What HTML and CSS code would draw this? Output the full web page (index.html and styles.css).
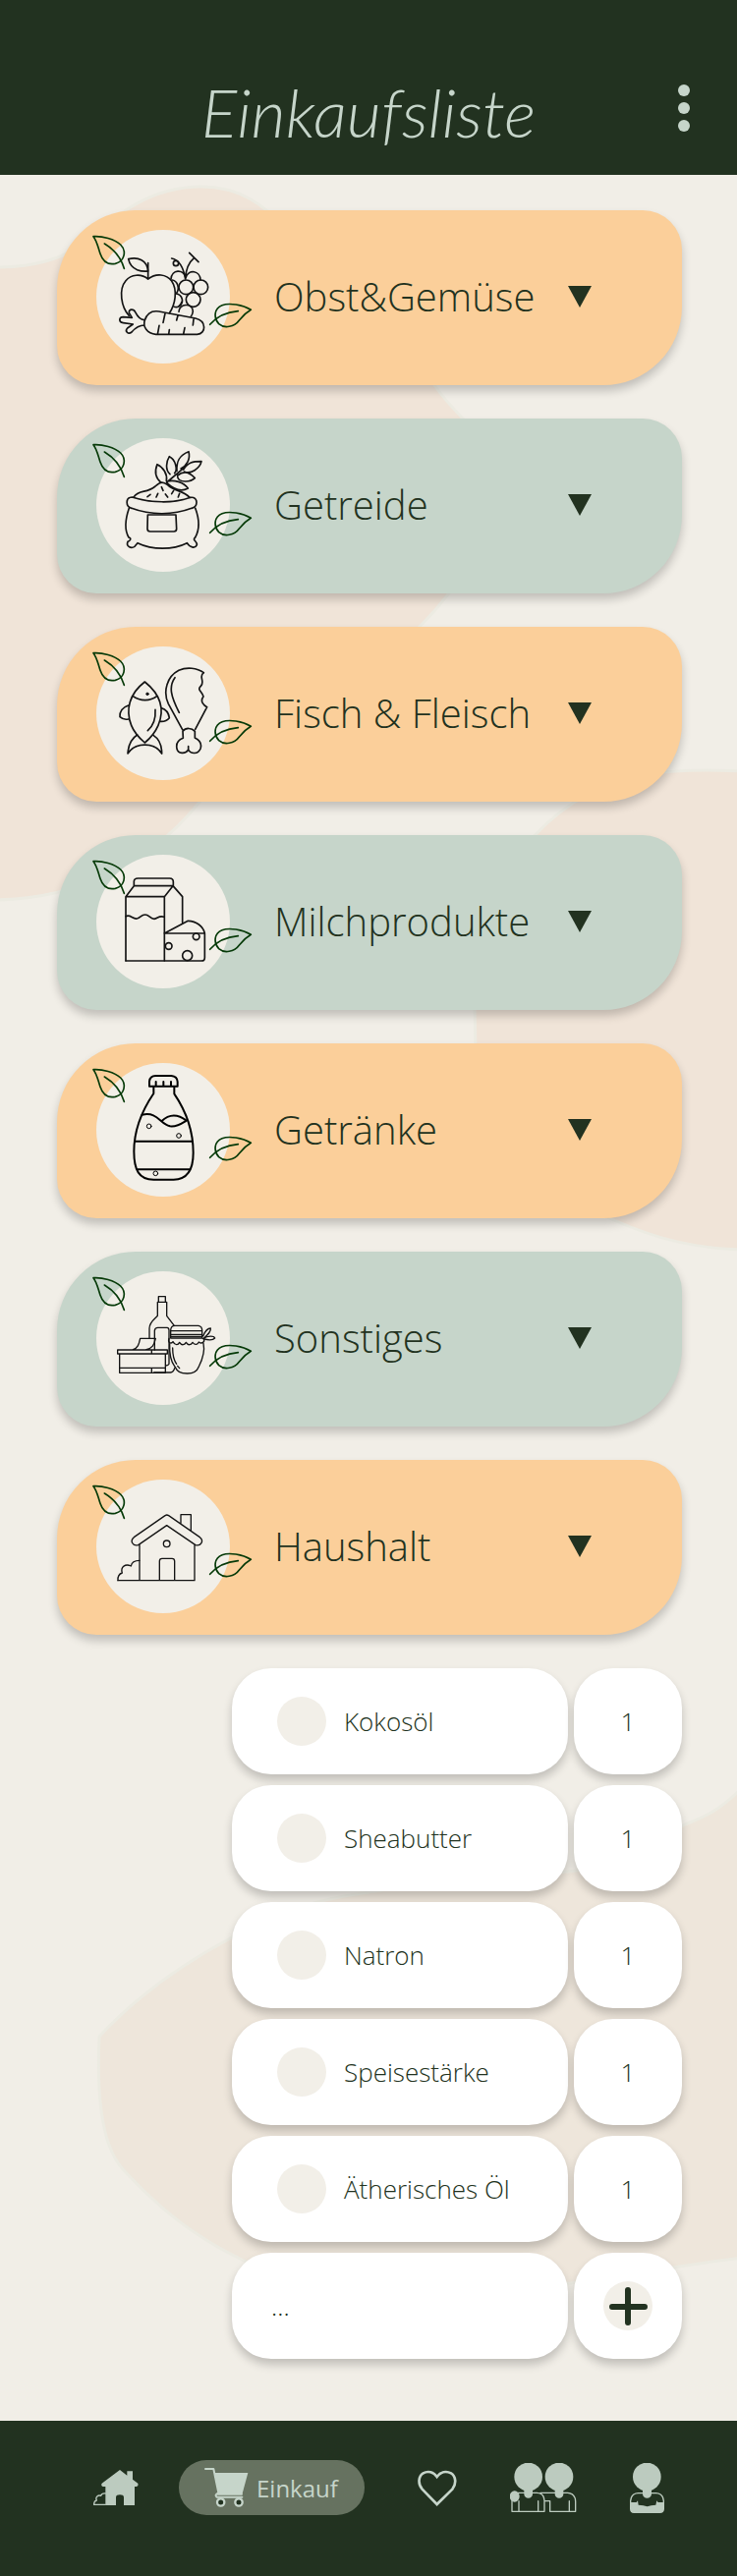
FILE: index.html
```html
<!DOCTYPE html>
<html lang="de">
<head>
<meta charset="utf-8">
<meta name="viewport" content="width=device-width, initial-scale=1">
<title>Einkaufsliste</title>
<link rel="stylesheet" href="styles.css">
</head>
<body>
<svg class="defs" aria-hidden="true">
  <symbol id="plate" viewBox="39 42 492 408">
    <circle class="plate" cx="258" cy="246" r="204"/>
    <g class="leaf">
      <path d="M45 62C72 60 110 70 128 87C147 106 141 138 112 145C88 150 73 136 66 115C58 90 56 76 45 62Z"/>
      <path d="M79 84C106 100 128 122 139 160"/>
      <path d="M526 286C500 270 460 264 438 272C414 281 411 310 428 329C445 344 475 339 491 317C504 301 514 293 526 286Z"/>
      <path d="M487 290C452 293 424 304 401 331"/>
    </g>
  </symbol>
  <symbol id="arrow" viewBox="0 0 24 22"><path d="M0 0H24L12 22Z"/></symbol>
</svg>

<header class="header">
  <h1 class="title">Einkaufsliste</h1>
  <button class="menu" type="button" aria-label="Menü">
    <svg viewBox="0 0 12 48" width="12" height="48"><circle cx="6" cy="6" r="6"/><circle cx="6" cy="24" r="6"/><circle cx="6" cy="42" r="6"/></svg>
  </button>
</header>

<main class="main">
  <svg class="blobs" viewBox="0 178 750 2286" preserveAspectRatio="none" aria-hidden="true">
    <path class="blob" d="M-6 272C35 272 62 264 85 248C115 222 150 190 205 190C245 190 270 210 290 232C340 282 400 325 442 392C470 432 505 450 505 480C508 540 465 600 425 640C350 715 260 750 200 820C150 880 80 915 -6 916Z"/>
    <path class="blob" d="M756 785C700 782 640 784 602 806C540 840 520 880 492 930C478 960 484 1020 484 1080C484 1150 560 1215 625 1242C670 1262 710 1271 756 1272Z"/>
    <path class="blob blob-sand" d="M756 1819C730 1845 715 1850 697 1857C650 1882 620 1902 578 1905C500 1912 430 1916 350 1930C310 1938 270 1950 236 1972C180 2002 135 2036 101 2073C99 2120 100 2180 125 2208C160 2246 195 2275 246 2300C310 2330 480 2328 580 2324C640 2316 690 2306 756 2298Z"/>
  </svg>

  <div class="categories">
    <button class="category peach" type="button" aria-expanded="false">
      <svg class="picture" viewBox="39 42 492 408">
        <use href="#plate" x="39" y="42" width="492" height="408"/>
        <g class="ink">
          <path d="M212 143V192C190 174 160 178 144 197C121 224 130 278 154 304M212 192C237 173 268 177 284 198C303 226 295 270 277 296"/>
          <path d="M212 168C196 170 160 168 152 131C182 124 209 134 212 168Z"/>
          <path d="M284 129C300 132 318 145 326 192C327 160 335 142 353 127M338 112L366 140"/><circle cx="297" cy="144" r="8"/>
          <path d="M282 192C284 162 320 160 327 188C336 160 371 166 372 195M286 195C302 198 310 220 298 237C315 239 325 262 307 275"/>
          <circle cx="328" cy="217" r="22"/><circle cx="373" cy="217" r="22"/><circle cx="350" cy="255" r="22"/><path d="M292 277C302 281 312 273 315 262M306 292C306 266 348 264 349 291C348 298 346 303 343 306"/>
          <path d="M202 318C209 296 225 288 245 291L357 312C391 320 390 359 362 361H236C209 359 195 337 202 318ZM200 317C186 316 180 307 173 293C169 284 153 281 154 295L163 310L136 308C122 309 122 324 136 326L166 330L149 342C140 351 151 363 162 354C174 340 184 333 201 333M264 297L258 325M303 304L299 318M351 315L349 333M246 334L241 361M277 347L275 361M324 341L320 360"/>
        </g>
      </svg>
      <span class="name">Obst&amp;Gemüse</span>
      <svg class="arrow"><use href="#arrow"/></svg>
    </button>

    <button class="category sage" type="button" aria-expanded="false">
      <svg class="picture" viewBox="39 42 492 408">
        <use href="#plate" x="39" y="42" width="492" height="408"/>
        <g class="ink" transform="translate(0 -6)">
          <path d="M163 228C142 229 143 258 162 262C220 284 290 283 345 262C366 258 365 226 342 229C290 248 220 246 163 228Z"/>
          <path d="M168 228C187 202 206 219 234 195C250 180 258 180 272 191C293 212 319 206 339 229"/>
          <path d="M154 262C143 294 138 326 153 351C163 354 157 362 150 364C144 379 160 386 171 379L180 368C225 390 288 390 331 368C339 382 356 386 361 374C363 362 345 360 356 351C371 325 368 293 356 261"/>
          <path d="M211 282H297L299 325Q299 333 291 333H218Q210 333 210 325Z"/>
          <path d="M252 184C234 169 232 148 240 128C258 136 272 158 268 178M279 158C264 145 267 120 277 104C296 113 303 144 293 155M300 148C298 116 309 99 336 89C342 112 330 132 312 141M320 144C334 121 348 119 375 119C370 140 342 160 322 150M302 162C322 145 341 154 355 170C340 184 306 184 302 166M269 180C292 174 320 182 334 201C312 213 288 202 269 184M269 183L320 140"/>
          <path d="M253 197L258 208M290 208L284 218M219 220L210 227M242 217L237 228M265 219L272 228M308 217L304 228"/>
        </g>
      </svg>
      <span class="name">Getreide</span>
      <svg class="arrow"><use href="#arrow"/></svg>
    </button>

    <button class="category peach" type="button" aria-expanded="false">
      <svg class="picture" viewBox="39 42 492 408">
        <use href="#plate" x="39" y="42" width="492" height="408"/>
        <g class="ink" transform="translate(0 -12)">
          <path d="M202 162C248 199 264 245 243 295C232 320 219 334 202 348C185 333 170 318 161 295C142 247 155 198 202 162ZM165 205C188 222 218 222 240 205M152 234C132 241 125 252 126 269C135 277 146 278 154 275M252 242C266 246 275 258 277 272C269 282 261 284 249 283M234 247C236 276 230 294 211 311"/>
          <path d="M179 324C160 336 152 355 150 381C173 346 231 345 254 381C254 356 247 337 228 325"/><circle class="dot" cx="210" cy="199" r="4"/>
          <path d="M317 308L274 229C256 190 271 145 306 127C330 116 361 119 382 134C365 143 386 160 374 174C359 187 378 191 381 207C369 222 383 235 392 239L356 307M294 149C274 177 282 207 307 256M318 313C327 301 345 302 355 313V333C369 340 377 351 372 366C365 384 342 383 335 369C326 384 303 382 300 366C296 347 306 339 319 334ZM335 359V370"/>
        </g>
      </svg>
      <span class="name">Fisch &amp; Fleisch</span>
      <svg class="arrow"><use href="#arrow"/></svg>
    </button>

    <button class="category sage" type="button" aria-expanded="false">
      <svg class="picture" viewBox="39 42 492 408">
        <use href="#plate" x="39" y="42" width="492" height="408"/>
        <g class="ink" transform="translate(0 -3)">
          <path d="M144 369V173L169 140H288L317 173V253M144 173H262L288 140M262 173V369M169 140V126Q170 117 181 117H278Q289 117 289 128V140"/>
          <path d="M144 233C158 226 164 242 178 240C190 238 190 228 203 228C216 228 218 241 231 241C242 240 245 229 261 235"/>
          <path d="M144 369H375Q385 369 385 359V285H262L334 247C359 248 380 263 385 285"/>
          <circle cx="359" cy="295" r="10"/><circle cx="275" cy="324" r="10"/><circle cx="332" cy="353" r="15"/>
        </g>
      </svg>
      <span class="name">Milchprodukte</span>
      <svg class="arrow"><use href="#arrow"/></svg>
    </button>

    <button class="category peach" type="button" aria-expanded="false">
      <svg class="picture" viewBox="39 42 492 408">
        <use href="#plate" x="39" y="42" width="492" height="408"/>
        <g class="ink heavy" transform="translate(0 -9)">
          <path d="M216 122V107Q218 90 235 90H283Q301 92 302 108V122ZM236 108V122M259 108V122M282 108V122"/>
          <path d="M229 123V144C195 194 169 254 169 321C169 377 184 407 229 407H290C334 407 350 376 350 325C350 255 326 195 292 145V123"/>
          <path d="M194 209C242 199 247 236 279 244C299 247 316 235 329 227C303 207 276 207 253 229M174 290H346M181 376H338"/>
          <g class="fine"><circle cx="215" cy="244" r="7"/><circle cx="306" cy="273" r="7"/><circle cx="235" cy="388" r="7"/></g>
        </g>
      </svg>
      <span class="name">Getränke</span>
      <svg class="arrow"><use href="#arrow"/></svg>
    </button>

    <button class="category sage" type="button" aria-expanded="false">
      <svg class="picture" viewBox="39 42 492 408">
        <use href="#plate" x="39" y="42" width="492" height="408"/>
        <g class="ink light">
          <path d="M244 119H265V136H244ZM241 136H269V178L292 208M241 136V178C229 190 216 198 216 216V246M232 282V223Q233 214 242 214H270Q276 215 276 222V325Q274 330 266 330M230 351H280Q290 350 293 338"/>
          <path d="M119 282H271V294H119ZM125 294V352H265V294M125 337H265M223 282V294M223 337V352M164 282C181 278 184 265 188 247H235C231 266 225 278 204 282"/>
          <path d="M281 223Q281 208 294 208H366Q377 210 377 223V246H281ZM281 224H377M281 235H377M281 241H377M276 247C271 262 284 264 288 257C295 270 304 267 308 259C315 270 323 267 328 259C335 270 343 267 348 259C356 269 363 266 367 258C376 265 388 258 381 247M278 263C277 291 281 316 293 332C301 348 310 354 332 354C351 354 361 349 367 333C381 305 386 285 381 262M287 276C287 298 291 314 299 325M302 331L308 338M380 240C386 225 394 216 403 216C405 226 395 235 380 248C395 238 413 239 416 246C410 253 394 252 380 248"/>
        </g>
      </svg>
      <span class="name">Sonstiges</span>
      <svg class="arrow"><use href="#arrow"/></svg>
    </button>

    <button class="category peach" type="button" aria-expanded="true" aria-controls="haushalt">
      <svg class="picture" viewBox="39 42 492 408">
        <use href="#plate" x="39" y="42" width="492" height="408"/>
        <g class="ink light" transform="translate(0 -6)">
          <path d="M264 158Q269 154 275 158L370 224C384 235 373 252 357 248L269 188L182 248C164 252 156 235 169 224ZM312 184V155H343V205M186 247V356M354 247V356M120 356H354M247 356V297Q247 289 255 289H285Q293 289 293 297V356"/>
          <circle cx="269" cy="244" r="10"/>
          <path d="M120 356C119 342 123 336 133 333C127 314 143 304 160 312C162 300 172 295 186 295"/>
        </g>
      </svg>
      <span class="name">Haushalt</span>
      <svg class="arrow"><use href="#arrow"/></svg>
    </button>
  </div>

  <ul class="items" id="haushalt">
    <li class="row"><label class="item"><input class="check" type="checkbox">Kokosöl</label><input class="amount" type="text" inputmode="numeric" value="1" aria-label="Menge Kokosöl"></li>
    <li class="row"><label class="item"><input class="check" type="checkbox">Sheabutter</label><input class="amount" type="text" inputmode="numeric" value="1" aria-label="Menge Sheabutter"></li>
    <li class="row"><label class="item"><input class="check" type="checkbox">Natron</label><input class="amount" type="text" inputmode="numeric" value="1" aria-label="Menge Natron"></li>
    <li class="row"><label class="item"><input class="check" type="checkbox">Speisestärke</label><input class="amount" type="text" inputmode="numeric" value="1" aria-label="Menge Speisestärke"></li>
    <li class="row"><label class="item"><input class="check" type="checkbox">Ätherisches Öl</label><input class="amount" type="text" inputmode="numeric" value="1" aria-label="Menge Ätherisches Öl"></li>
    <li class="row">
      <input class="item new-item" type="text" placeholder="..." aria-label="Neuer Artikel">
      <button class="add" type="button" aria-label="Hinzufügen">
        <svg viewBox="0 0 50 50" width="50" height="50"><circle cx="25" cy="25" r="25"/><path d="M25 9V42M9 26H42"/></svg>
      </button>
    </li>
  </ul>
</main>

<nav class="nav" aria-label="Hauptnavigation">
  <a class="link" href="#start" aria-label="Start">
    <svg viewBox="45 189 138 111" width="46" height="37">
      <path class="solid" d="M126 189L148 206V193H165V218L181 230Q184 241 171 240V297H138V272Q137 265 126 265Q115 265 114 272V297H82V240H74Q67 237 71 230Z"/>
      <path class="line" d="M82 295H47Q46 284 55 282C50 271 60 265 68 268C70 262 74 260 82 261"/>
    </svg>
  </a>
  <a class="link current" href="#einkauf" aria-current="page">
    <svg viewBox="383 192 135 120" width="45" height="40">
      <path class="solid" d="M414 207H516L499 270H426Z"/>
      <path class="line thick" d="M386 195H411L426 268Q413 274 421 281H498M424 272H497"/>
      <circle class="wheel" cx="433" cy="297" r="11"/><circle class="wheel" cx="488" cy="297" r="11"/>
    </svg>
    Einkauf
  </a>
  <a class="link" href="#favoriten" aria-label="Favoriten">
    <svg viewBox="74 190 120 111" width="40" height="37"><path class="line heart" d="M133 295L88 249C74 233 76 209 91 200C105 192 123 196 133 211C144 196 161 192 176 200C191 209 193 233 180 249Z"/></svg>
  </a>
  <a class="link" href="#gruppe" aria-label="Gruppe">
    <svg viewBox="363 171 204 153" width="68" height="51">
      <path class="line" d="M387 262H445Q467 263 468 286V319H369V284M390 287V319M449 287V319M456 262H539Q562 264 563 288V319H485V287H468M544 287V319"/>
      <g class="solid"><circle cx="419" cy="213" r="43"/><circle cx="513" cy="213" r="43"/><path d="M406 250H432V266A13 12 0 0 1 406 266ZM500 250H526V266A13 12 0 0 1 500 266Z"/><ellipse cx="377" cy="273" rx="15" ry="17"/></g>
    </svg>
  </a>
  <a class="link" href="#profil" aria-label="Profil">
    <svg viewBox="723 171 105 153" width="35" height="51">
      <path class="line" d="M725 300V286Q727 264 748 263H803Q824 264 826 286V300"/>
      <g class="solid"><circle cx="775" cy="213" r="43"/><path d="M762 250H789V266A13 12 0 0 1 762 266ZM723 291H743L747 286L749 299Q765 299 776 304Q787 300 802 299L805 286L809 291H828V312Q827 324 815 324H735Q723 323 723 311Z"/></g>
    </svg>
  </a>
</nav>
</body>
</html>
```
FILE: styles.css
```css
:root {
  --forest: #223220;
  --sage: #c6d5ca;
  --peach: #fbcf9a;
  --cream: #f1eee7;
  --shadow: 0 6px 10px rgba(0, 0, 0, 0.2);
}

* { box-sizing: border-box; }

body {
  margin: 0;
  background: var(--cream);
  color: var(--forest);
  font-family: "Open Sans", "Noto Sans", sans-serif;
  font-weight: 300;
}

button, input {
  margin: 0;
  border: 0;
  color: inherit;
  font: inherit;
}

button { cursor: pointer; }
svg { display: block; flex: none; }
.defs { position: absolute; width: 0; height: 0; }

.header {
  display: grid;
  grid-template-columns: 1fr auto 1fr;
  align-items: center;
  padding: 58px 48px 20px;
  background: var(--forest);
  color: var(--sage);
}

.title {
  grid-column: 2;
  margin: 0;
  padding-top: 12px;
  font: italic 300 68px/88px Lato, sans-serif;
}

.menu {
  justify-self: end;
  padding: 4px 0 0;
  background: none;
  fill: var(--sage);
}

.main {
  position: relative;
  padding: 36px 56px 63px 58px;
}

.blobs {
  position: absolute;
  inset: 0;
  z-index: -1;
  width: 100%;
  height: 100%;
}

.blob { fill: #f0e4d8; stroke: #ecebe2; stroke-width: 3; }
.blob-sand { fill: #eee6db; }

.categories { display: grid; gap: 34px; }

.category {
  display: flex;
  align-items: center;
  gap: 22px;
  width: 100%;
  height: 178px;
  padding: 0 92px 2px 35px;
  border-radius: 80px 40px 80px 40px;
  box-shadow: var(--shadow);
  font-size: 40px;
  line-height: 48px;
  text-align: left;
}

.peach { background: var(--peach); }
.sage { background: var(--sage); }
.picture { width: 164px; height: 136px; }
.plate { fill: #f2efe8; }

.leaf {
  fill: none;
  stroke: #063a08;
  stroke-width: 5;
  stroke-linecap: round;
  stroke-linejoin: round;
}

.ink {
  fill: none;
  stroke: #141414;
  stroke-width: 5;
  stroke-linecap: round;
  stroke-linejoin: round;
}

.heavy { stroke: #000; stroke-width: 6; }
.light { stroke-width: 4; }
.fine { stroke-width: 3; }
.dot { fill: #141414; stroke-width: 2; }

.arrow {
  width: 24px;
  height: 22px;
  margin-left: auto;
  fill: var(--forest);
}

.items {
  display: grid;
  gap: 11px;
  margin: 34px 0 0;
  padding: 0 0 0 178px;
  list-style: none;
}

.row {
  display: grid;
  grid-template-columns: 1fr 110px;
  gap: 6px;
  height: 108px;
}

.item, .amount, .add {
  border-radius: 40px;
  background: #fff;
  box-shadow: var(--shadow);
  font-size: 26px;
  line-height: 32px;
}

.item {
  display: flex;
  align-items: center;
  gap: 18px;
  min-width: 0;
  padding: 0 20px 0 46px;
}

.check {
  appearance: none;
  flex: none;
  width: 50px;
  height: 50px;
  border-radius: 50%;
  background: #f2efe8;
}

.check:checked { background: var(--forest); }

.new-item { padding-left: 40px; }
.new-item::placeholder { color: inherit; opacity: 1; }

.amount {
  width: 100%;
  padding: 0;
  text-align: center;
}

.add {
  display: grid;
  place-items: center;
  padding: 0;
  fill: #f2efe8;
  stroke-linecap: round;
}

.add path { stroke: var(--forest); stroke-width: 6; }

.nav {
  display: flex;
  align-items: flex-start;
  gap: 54px;
  padding: 40px 74px 62px 95px;
  background: var(--forest);
}

.link {
  display: flex;
  align-items: center;
  height: 56px;
  color: var(--sage);
  text-decoration: none;
}

.current {
  gap: 8px;
  width: 190px;
  margin-left: -13px;
  padding-left: 26px;
  border-radius: 28px;
  background: #667260;
  font-size: 24px;
  font-weight: 400;
}

.solid { fill: #bccbbf; }
.current .solid { fill: var(--sage); }

.line, .wheel {
  fill: none;
  stroke: #bccbbf;
  stroke-width: 4;
  stroke-linecap: round;
  stroke-linejoin: round;
}

.thick { stroke: var(--sage); stroke-width: 6; }
.heart { stroke: var(--sage); stroke-width: 8; stroke-linejoin: miter; }
.wheel { fill: var(--forest); stroke: var(--sage); stroke-width: 7; }
```
